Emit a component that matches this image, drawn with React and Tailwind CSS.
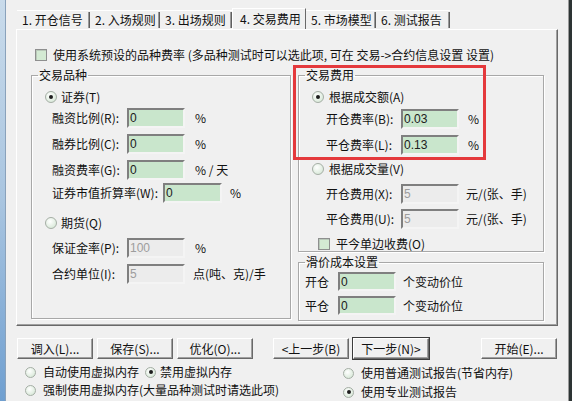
import React from "react";

const Radio = ({ checked, size = "w-[12px] h-[12px]" }) => (
  <span
    className={`${size} shrink-0 rounded-full border border-[#a5aea5] bg-[radial-gradient(circle_at_40%_35%,#ffffff,#cfe3cf)] flex items-center justify-center`}
  >
    {checked && <span className="w-[4px] h-[4px] rounded-full bg-[#1e1e1e]" />}
  </span>
);

const Check = () => (
  <span className="w-[12px] h-[12px] shrink-0 border border-[#8e8f8f] bg-[#d3ead3] shadow-[inset_1px_1px_0_#b9c9b9]" />
);

const Field = ({ value, disabled, w = "w-[58px]", h = "h-[20px]" }) => (
  <div
    className={`${w} ${h} shrink-0 border-2 border-t-[#7f7f7f] border-l-[#7f7f7f] border-r-[#f4f4f4] border-b-[#f4f4f4] pl-[1px] flex items-center font-['Liberation_Sans',sans-serif] text-[12px] ${
      disabled ? "bg-[#ececec] text-[#9d9d9d]" : "bg-[#c9e6cc] text-[#202020]"
    }`}
  >
    {value}
  </div>
);

const Group = ({ title, className, children }) => (
  <fieldset
    className={`${className} border border-[#a8a8a8] shadow-[1px_1px_0_#fff,inset_1px_1px_0_#fff] flex flex-col`}
  >
    <legend className="ml-[6px] px-[1px] leading-[14px]">{title}</legend>
    {children}
  </fieldset>
);

const Btn = ({ label, isDefault, className = "" }) => (
  <div
    className={`${className} w-[76px] h-[21px] shrink-0 flex items-center justify-center bg-[#f0f0f0] border border-t-white border-l-white border-r-[#696969] border-b-[#696969] shadow-[inset_-1px_-1px_0_#a0a0a0] ${
      isDefault ? "outline outline-1 outline-[#3c3c3c]" : ""
    }`}
  >
    {label}
  </div>
);

const tabs = [
  { label: "1. 开仓信号", w: "w-[73px]" },
  { label: "2. 入场规则", w: "w-[70px]" },
  { label: "3. 出场规则", w: "w-[72px]" },
  { label: "4. 交易费用", w: "w-[74px]", active: true },
  { label: "5. 市场模型", w: "w-[70px]" },
  { label: "6. 测试报告", w: "w-[74px]" },
];

export default function App() {
  return (
    <div className="relative flex w-[572px] h-[401px] overflow-hidden bg-[#f0f0f0] text-[12px] leading-[14px] text-[#111] font-['Noto_Sans_CJK_SC',sans-serif]">
      {/* window left edge */}
      <div className="w-[6px] shrink-0 bg-gradient-to-b from-[#c9dbeb] via-[#a9c5e0] to-[#6f9fd0] border-r border-[#8aa2bb]" />

      <div className="flex flex-col w-[562px] pl-[10px]">
        {/* tabs */}
        <div className="flex h-[19px] mt-[10px] ml-[1px]">
          {tabs.map((t) =>
            t.active ? (
              <div
                key={t.label}
                className={`${t.w} h-[21px] -mt-[2px] -mb-[1px] z-10 bg-[#f0f0f0] border-t border-l border-white border-r border-r-[#696969] flex items-center pl-[7px]`}
              >
                {t.label}
              </div>
            ) : (
              <div
                key={t.label}
                className={`${t.w} flex items-center justify-between pl-[5px] border-t border-white`}
              >
                <span>{t.label}</span>
                <span className="flex h-[16px]">
                  <span className="w-[1px] bg-[#9a9a9a]" />
                  <span className="w-[1px] bg-[#5f5f5f]" />
                </span>
              </div>
            )
          )}
        </div>

        {/* tab panel */}
        <div className="w-[542px] h-[297px] border border-t-white border-l-white border-r-[#696969] border-b-[#696969] shadow-[inset_-1px_-1px_0_#a0a0a0] flex flex-col">
          <div className="flex items-center gap-[6px] mt-[18px] ml-[18px] h-[13px]">
            <Check />
            <span>使用系统预设的品种费率 (多品种测试时可以选此项, 可在 交易-&gt;合约信息设置 设置)</span>
          </div>

          <div className="flex mt-[7px] ml-[14px] gap-[7px]">
            {/* left group */}
            <Group title="交易品种" className="w-[260px] h-[251px]">
              <div className="flex items-center gap-[4px] h-[18px] mt-[6px] pl-[13px]">
                <Radio checked />
                <span>证券(T)</span>
              </div>
              <div className="flex items-center h-[20px] mt-[2px] pl-[20px]">
                <span className="w-[75px]">融资比例(R):</span>
                <Field value="0" />
                <span className="ml-[10px]">%</span>
              </div>
              <div className="flex items-center h-[20px] mt-[6px] pl-[20px]">
                <span className="w-[75px]">融券比例(C):</span>
                <Field value="0" />
                <span className="ml-[10px]">%</span>
              </div>
              <div className="flex items-center h-[20px] mt-[6px] pl-[20px]">
                <span className="w-[75px]">融资费率(G):</span>
                <Field value="0" />
                <span className="ml-[10px]">% / 天</span>
              </div>
              <div className="flex items-center h-[20px] mt-[3px] pl-[20px]">
                <span className="w-[111px]">证券市值折算率(W):</span>
                <Field value="0" w="w-[59px]" />
                <span className="ml-[8px]">%</span>
              </div>
              <div className="flex items-center gap-[4px] h-[18px] mt-[11px] pl-[13px]">
                <Radio />
                <span>期货(Q)</span>
              </div>
              <div className="flex items-center h-[20px] mt-[6px] pl-[20px]">
                <span className="w-[75px]">保证金率(P):</span>
                <Field value="100" disabled />
                <span className="ml-[10px]">%</span>
              </div>
              <div className="flex items-center h-[20px] mt-[6px] pl-[20px]">
                <span className="w-[75px]">合约单位(I):</span>
                <Field value="5" disabled />
                <span className="ml-[8px]">点(吨、克)/手</span>
              </div>
            </Group>

            {/* right column */}
            <div className="flex flex-col w-[246px]">
              <Group title="交易费用" className="w-[246px] h-[184px]">
                <div className="flex items-center gap-[5px] h-[18px] mt-[6px] pl-[13px]">
                  <Radio checked />
                  <span>根据成交额(A)</span>
                </div>
                <div className="flex items-center h-[20px] mt-[3px] pl-[27px]">
                  <span className="w-[75px]">开仓费率(B):</span>
                  <Field value="0.03" />
                  <span className="ml-[9px]">%</span>
                </div>
                <div className="flex items-center h-[20px] mt-[6px] pl-[27px]">
                  <span className="w-[75px]">平仓费率(L):</span>
                  <Field value="0.13" />
                  <span className="ml-[9px]">%</span>
                </div>
                <div className="flex items-center gap-[5px] h-[18px] mt-[5px] pl-[13px]">
                  <Radio />
                  <span>根据成交量(V)</span>
                </div>
                <div className="flex items-center h-[20px] mt-[6px] pl-[27px]">
                  <span className="w-[75px]">开仓费用(X):</span>
                  <Field value="5" disabled />
                  <span className="ml-[7px]">元/(张、手)</span>
                </div>
                <div className="flex items-center h-[20px] mt-[5px] pl-[27px]">
                  <span className="w-[75px]">平仓费用(U):</span>
                  <Field value="5" disabled />
                  <span className="ml-[7px]">元/(张、手)</span>
                </div>
                <div className="flex items-center gap-[6px] h-[13px] mt-[8px] pl-[19px]">
                  <Check />
                  <span>平今单边收费(O)</span>
                </div>
              </Group>

              <Group title="滑价成本设置" className="w-[246px] h-[66px] mt-[3px]">
                <div className="flex items-center h-[19px] mt-[3px] pl-[6px]">
                  <span className="w-[33px]">开仓</span>
                  <Field value="0" w="w-[58px]" h="h-[19px]" />
                  <span className="ml-[7px]">个变动价位</span>
                </div>
                <div className="flex items-center h-[19px] mt-[5px] pl-[6px]">
                  <span className="w-[33px]">平仓</span>
                  <Field value="0" w="w-[58px]" h="h-[19px]" />
                  <span className="ml-[7px]">个变动价位</span>
                </div>
              </Group>
            </div>
          </div>
        </div>

        {/* buttons */}
        <div className="flex mt-[12px] ml-[1px]">
          <Btn label="调入(L)..." />
          <Btn label="保存(S)..." className="ml-[4px]" />
          <Btn label="优化(O)..." className="ml-[4px]" />
          <Btn label="<上一步(B)" className="ml-[20px]" />
          <Btn label="下一步(N)>" className="ml-[4px]" isDefault />
          <Btn label="开始(E)..." className="ml-[52px]" />
        </div>

        {/* options */}
        <div className="flex">
          <div className="flex flex-col w-[318px] ml-[9px]">
            <div className="flex items-center h-[14px] mt-[6px]">
              <Radio size="w-[11px] h-[11px]" />
              <span className="ml-[7px] w-[102px]">自动使用虚拟内存</span>
              <Radio checked size="w-[11px] h-[11px]" />
              <span className="ml-[4px]">禁用虚拟内存</span>
            </div>
            <div className="flex items-center h-[14px] mt-[4px]">
              <Radio size="w-[11px] h-[11px]" />
              <span className="ml-[7px]">强制使用虚拟内存(大量品种测试时请选此项)</span>
            </div>
          </div>
          <div className="flex flex-col">
            <div className="flex items-center h-[14px] mt-[7px]">
              <Radio size="w-[11px] h-[11px]" />
              <span className="ml-[7px]">使用普通测试报告(节省内存)</span>
            </div>
            <div className="flex items-center h-[14px] mt-[5px]">
              <Radio checked size="w-[11px] h-[11px]" />
              <span className="ml-[7px]">使用专业测试报告</span>
            </div>
          </div>
        </div>
      </div>

      {/* window right edge */}
      <div className="w-[4px] shrink-0 bg-[#2d3434] border-l border-[#9a9a9a]" />

      {/* red annotation box */}
      <div className="absolute left-[293px] top-[65px] w-[193px] h-[95px] border-[3px] border-[#e4393c]" />
    </div>
  );
}
